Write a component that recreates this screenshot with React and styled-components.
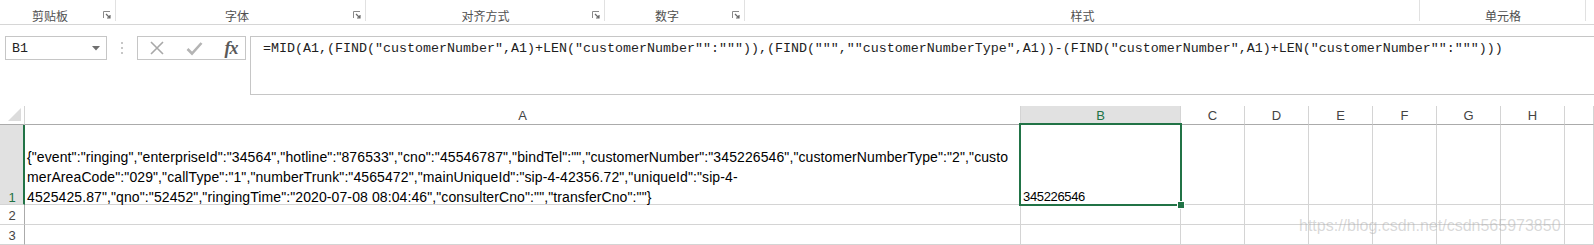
import React from "react";
import styled, { createGlobalStyle } from "styled-components";

const Global = createGlobalStyle`
  html, body { margin: 0; padding: 0; background: #ffffff; overflow: hidden; }
  #root { width: 1594px; height: 245px; overflow: hidden; }
`;

const Page = styled.div`
  width: 1594px;
  height: 245px;
  display: flex;
  flex-direction: column;
  background: #fff;
  overflow: hidden;
`;

/* ---------- Ribbon group labels ---------- */
const Ribbon = styled.div`
  display: flex;
  height: 25px;
  box-sizing: border-box;
  border-bottom: 1px solid #d6d6d6;
  flex-shrink: 0;
`;

const Group = styled.div`
  position: relative;
  width: ${(p) => p.$w}px;
  flex-shrink: 0;
  height: 24px;
  box-sizing: border-box;
  display: flex;
  align-items: flex-end;
  justify-content: center;
  padding-right: ${(p) => p.$pr || 0}px;
  padding-bottom: 0;
  &::after {
    content: "";
    position: absolute;
    right: 0;
    top: 0;
    height: 21px;
    border-right: ${(p) => (p.$sep ? "1px solid #e1e1e1" : "none")};
  }
`;

const GroupLabel = styled.span`
  font-family: "Noto Sans CJK SC", "Noto Sans", sans-serif;
  font-size: 12px;
  line-height: 16px;
  color: #505050;
`;

const Launcher = styled.svg`
  position: absolute;
  right: 5px;
  bottom: 5px;
  width: 8px;
  height: 8px;
`;

const LauncherIcon = () => (
  <Launcher viewBox="0 0 8 8">
    <path d="M0.5 7 V0.5 H7" stroke="#8a8a8a" strokeWidth="1" fill="none" />
    <path d="M3 3 L7 7 M4 7 H7 V4" stroke="#6a6a6a" strokeWidth="1.2" fill="none" />
  </Launcher>
);

/* ---------- Formula bar ---------- */
const FormulaBar = styled.div`
  display: flex;
  align-items: flex-start;
  height: 81px;
  box-sizing: border-box;
  padding: 11px 0 0 5px;
  flex-shrink: 0;
`;

const NameBox = styled.div`
  width: 102px;
  height: 24px;
  box-sizing: border-box;
  border: 1px solid #c6c6c6;
  display: flex;
  align-items: center;
  justify-content: space-between;
  padding: 0 6px 0 6px;
  font-family: "Liberation Mono", monospace;
  font-size: 13.3px;
  color: #222;
`;

const DropArrow = styled.svg`
  width: 8px;
  height: 5px;
`;

const Grip = styled.svg`
  width: 4px;
  height: 14px;
  margin: 5px 13px 0 13px;
`;

const ButtonBox = styled.div`
  width: 109px;
  height: 24px;
  box-sizing: border-box;
  border: 1px solid #c6c6c6;
  display: flex;
  align-items: center;
  padding-left: 6px;
`;

const IconSlot = styled.div`
  width: ${(p) => p.$w}px;
  height: 22px;
  display: flex;
  align-items: center;
  justify-content: center;
`;

const Fx = styled.span`
  font-family: "Liberation Serif", serif;
  font-style: italic;
  font-weight: bold;
  font-size: 18px;
  color: #5a5a5a;
  letter-spacing: -1px;
`;

const FormulaBox = styled.div`
  margin-left: 4px;
  flex: 1;
  height: 59px;
  box-sizing: border-box;
  border: 1px solid #c6c6c6;
  border-right: none;
  padding: 4px 0 0 12px;
  font-family: "Liberation Mono", monospace;
  font-size: 13.33px;
  line-height: 16px;
  color: #1e1e1e;
  white-space: nowrap;
  overflow: hidden;
`;

/* ---------- Sheet grid ---------- */
const Sheet = styled.div`
  position: relative;
  display: grid;
  grid-template-columns: 25px 996px 160px repeat(6, 64px) 1fr;
  grid-template-rows: 19px 80px 20px 20px;
  flex-shrink: 0;
`;

const Corner = styled.div`
  position: relative;
  box-sizing: border-box;
  border-right: 1px solid #d4d4d4;
  border-bottom: 1px solid #ababab;
`;

const CornerTri = styled.svg`
  position: absolute;
  right: 3px;
  bottom: 3px;
  width: 13px;
  height: 13px;
`;

const ColHead = styled.div`
  box-sizing: border-box;
  border-right: 1px solid #d4d4d4;
  border-bottom: ${(p) => (p.$sel ? "2px solid #217346" : "1px solid #ababab")};
  background: ${(p) => (p.$sel ? "#e1e1e1" : "#fff")};
  color: ${(p) => (p.$sel ? "#217346" : "#444")};
  display: flex;
  align-items: center;
  justify-content: center;
  font-family: "Liberation Sans", Arial, sans-serif;
  font-size: 13px;
  padding-top: ${(p) => (p.$sel ? 2 : 1)}px;
`;

const RowHead = styled.div`
  box-sizing: border-box;
  border-right: ${(p) => (p.$sel ? "2px solid #217346" : "1px solid #ababab")};
  border-bottom: 1px solid #d4d4d4;
  background: ${(p) => (p.$sel ? "#e1e1e1" : "#fff")};
  color: ${(p) => (p.$sel ? "#217346" : "#444")};
  display: flex;
  align-items: flex-end;
  justify-content: center;
  font-family: "Liberation Sans", Arial, sans-serif;
  font-size: 13px;
  padding-left: ${(p) => (p.$sel ? 1 : 0)}px;
`;

const RowLabel = styled.span`
  display: block;
  height: 19px;
  line-height: ${(p) => (p.$sel ? 25 : 21)}px;
`;

const Cell = styled.div`
  position: relative;
  box-sizing: border-box;
  border-right: 1px solid #d4d4d4;
  border-bottom: 1px solid #d4d4d4;
  display: flex;
  flex-direction: column;
  justify-content: flex-end;
  padding: 0 0 0 2px;
  font-family: "Liberation Sans", Arial, sans-serif;
  font-size: ${(p) => p.$fs || 14}px;
  letter-spacing: ${(p) => p.$ls || 0}px;
  color: #000;
  white-space: nowrap;
  overflow: visible;
`;

const Line = styled.div`
  height: 20px;
  line-height: 26px;
`;

const Selection = styled.div`
  position: absolute;
  left: -2px;
  top: -2px;
  right: -2px;
  bottom: -2px;
  border: 2px solid #217346;
  pointer-events: none;
  z-index: 2;
`;

const FillHandle = styled.div`
  position: absolute;
  right: -5px;
  bottom: -5px;
  width: 6px;
  height: 6px;
  background: #217346;
  border: 1px solid #fff;
`;

const Watermark = styled.div`
  position: absolute;
  left: 1299px;
  top: 111px;
  font-family: "Liberation Sans", Arial, sans-serif;
  font-size: 16px;
  color: rgba(170, 170, 170, 0.45);
  white-space: nowrap;
  z-index: 3;
`;

const groups = [
  { label: "剪贴板", w: 116, pr: 16, launcher: true },
  { label: "字体", w: 250, pr: 8, launcher: true },
  { label: "对齐方式", w: 239, pr: 0, launcher: true },
  { label: "数字", w: 140, pr: 16, launcher: true },
  { label: "样式", w: 675, pr: 0, launcher: false },
  { label: "单元格", w: 166, pr: 0, launcher: false },
];

const formula =
  '=MID(A1,(FIND("customerNumber",A1)+LEN("customerNumber"":""")),(FIND(""",""customerNumberType",A1))-(FIND("customerNumber",A1)+LEN("customerNumber"":""")))';

const a1Lines = [
  '{"event":"ringing","enterpriseId":"34564","hotline":"876533","cno":"45546787","bindTel":"","customerNumber":"345226546","customerNumberType":"2","custo',
  'merAreaCode":"029","callType":"1","numberTrunk":"4565472","mainUniqueId":"sip-4-42356.72","uniqueId":"sip-4-',
  '4525425.87","qno":"52452","ringingTime":"2020-07-08 08:04:46","consulterCno":"","transferCno":""}',
];

const otherCols = ["C", "D", "E", "F", "G", "H"];

export default function App() {
  return (
    <Page>
      <Global />
      <Ribbon>
        {groups.map((g) => (
          <Group key={g.label} $w={g.w} $pr={g.pr} $sep>
            <GroupLabel>{g.label}</GroupLabel>
            {g.launcher && <LauncherIcon />}
          </Group>
        ))}
      </Ribbon>

      <FormulaBar>
        <NameBox>
          <span>B1</span>
          <DropArrow viewBox="0 0 8 5">
            <path d="M0 0 H8 L4 4.5 Z" fill="#6f6f6f" />
          </DropArrow>
        </NameBox>
        <Grip viewBox="0 0 4 14">
          <circle cx="2" cy="2" r="1" fill="#b5b5b5" />
          <circle cx="2" cy="7" r="1" fill="#b5b5b5" />
          <circle cx="2" cy="12" r="1" fill="#b5b5b5" />
        </Grip>
        <ButtonBox>
          <IconSlot $w={26}>
            <svg width="16" height="16" viewBox="0 0 16 16">
              <path d="M2 2 L14 14 M14 2 L2 14" stroke="#a8a8a8" strokeWidth="1.6" />
            </svg>
          </IconSlot>
          <IconSlot $w={48}>
            <svg width="17" height="15" viewBox="0 0 17 15">
              <path d="M1.5 8 L6 12.5 L15.5 2" stroke="#b4b4b4" strokeWidth="2.6" fill="none" />
            </svg>
          </IconSlot>
          <IconSlot $w={26}>
            <Fx>fx</Fx>
          </IconSlot>
        </ButtonBox>
        <FormulaBox>{formula}</FormulaBox>
      </FormulaBar>

      <Sheet>
        <Corner>
          <CornerTri viewBox="0 0 13 13">
            <path d="M13 0 V13 H0 Z" fill="#dcdcdc" />
          </CornerTri>
        </Corner>
        <ColHead>A</ColHead>
        <ColHead $sel>B</ColHead>
        {otherCols.map((c) => (
          <ColHead key={c}>{c}</ColHead>
        ))}
        <ColHead />

        <RowHead $sel>
          <RowLabel $sel>1</RowLabel>
        </RowHead>
        <Cell $fs={14} $ls={0.1}>
          {a1Lines.map((l, i) => (
            <Line key={i}>{l}</Line>
          ))}
        </Cell>
        <Cell $fs={13} $ls={-0.35}>
          <Line>345226546</Line>
          <Selection>
            <FillHandle />
          </Selection>
        </Cell>
        {otherCols.map((c) => (
          <Cell key={c} />
        ))}
        <Cell />

        {[2, 3].map((r) => (
          <React.Fragment key={r}>
            <RowHead>
              <RowLabel>{r}</RowLabel>
            </RowHead>
            <Cell />
            <Cell />
            {otherCols.map((c) => (
              <Cell key={c} />
            ))}
            <Cell />
          </React.Fragment>
        ))}
        <Watermark>https://blog.csdn.net/csdn565973850</Watermark>
      </Sheet>
    </Page>
  );
}
